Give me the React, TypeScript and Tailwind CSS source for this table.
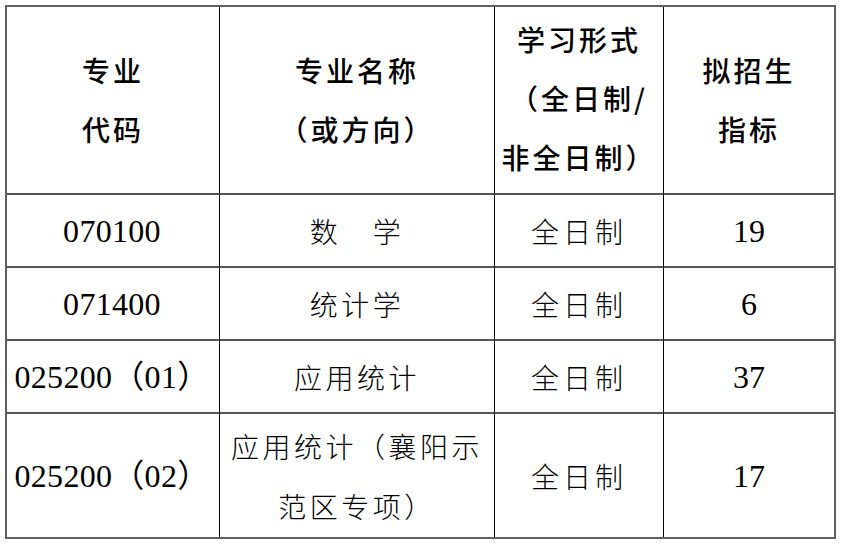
const cjk = "font-['Noto_Sans_CJK_SC',sans-serif]";
const num = "font-['Liberation_Serif','Noto_Sans_CJK_SC',serif]";

type Row = { code: string; name: string[]; mode: string; quota: string; tall?: boolean };

const rows: Row[] = [
  { code: '070100', name: ['数　学'], mode: '全日制', quota: '19' },
  { code: '071400', name: ['统计学'], mode: '全日制', quota: '6' },
  { code: '025200（01）', name: ['应用统计'], mode: '全日制', quota: '37' },
  { code: '025200（02）', name: ['应用统计（襄阳示', '范区专项）'], mode: '全日制', quota: '17', tall: true },
];

function Lines({ lines }: { lines: string[] }) {
  return (
    <>
      {lines.map((l, i) => (
        <div key={i}>{l}</div>
      ))}
    </>
  );
}

export default function App() {
  return (
    <div className="h-[548px] w-[847px] bg-white pl-[5px] pt-[5px] text-black">
      <div className="w-[831px] border-2 border-[#606060]">
        <table className="w-full table-fixed border-separate border-spacing-0">
          <colgroup>
            <col className="w-[213px]" />
            <col className="w-[275px]" />
            <col className="w-[169px]" />
            <col className="w-[170px]" />
          </colgroup>
          <thead>
            <tr className={`h-[188px] text-[28px] leading-[59px] tracking-[3px] ${cjk}`}>
              <th className="border-b-2 border-r border-b-[#555] border-r-black p-0 text-center font-medium">
                <Lines lines={['专业', '代码']} />
              </th>
              <th className="border-b-2 border-r border-b-[#555] border-r-black p-0 text-center font-medium">
                <Lines lines={['专业名称', '（或方向）']} />
              </th>
              <th className="border-b-2 border-r border-b-[#555] border-r-black p-0 pb-[3px] text-center font-medium">
                <Lines lines={['学习形式', '（全日制/', '非全日制）']} />
              </th>
              <th className="border-b-2 border-b-[#555] p-0 text-center font-medium">
                <Lines lines={['拟招生', '指标']} />
              </th>
            </tr>
          </thead>
          <tbody>
            {rows.map((r, i) => {
              const last = i === rows.length - 1;
              const bottom = last ? '' : 'border-b-2 border-b-[#555]';
              return (
                <tr key={r.code} className={r.tall ? 'h-[123px]' : 'h-[73px]'}>
                  <td className={`${bottom} border-r border-r-black p-0 pr-[2px] text-center text-[32px] tracking-[0.3px] ${num}`}>
                    {r.code}
                  </td>
                  <td
                    className={`${bottom} border-r border-r-black p-0 text-center text-[28px] font-light leading-[60px] tracking-[3.5px] ${cjk}`}
                  >
                    <Lines lines={r.name} />
                  </td>
                  <td
                    className={`${bottom} border-r border-r-black p-0 text-center text-[28px] font-light tracking-[4px] ${cjk}`}
                  >
                    {r.mode}
                  </td>
                  <td className={`${bottom} p-0 text-center text-[32px] ${num}`}>{r.quota}</td>
                </tr>
              );
            })}
          </tbody>
        </table>
      </div>
    </div>
  );
}
